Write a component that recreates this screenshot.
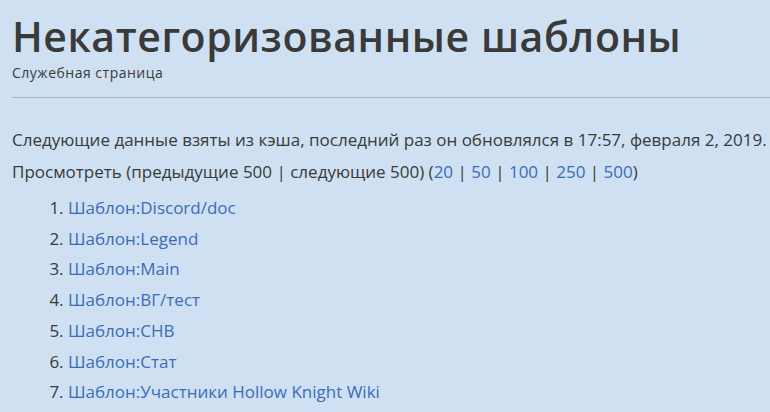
import React from "react";

const items = [
  "Шаблон:Discord/doc",
  "Шаблон:Legend",
  "Шаблон:Main",
  "Шаблон:ВГ/тест",
  "Шаблон:СНВ",
  "Шаблон:Стат",
  "Шаблон:Участники Hollow Knight Wiki",
];

export default function App() {
  return (
    <div
      className="w-[770px] h-[412px] overflow-hidden bg-[#cee0f2] text-[#3a3a3a] pl-[12px]"
      style={{ fontFamily: '"Open Sans", "Liberation Sans", sans-serif' }}
    >
      <h1 className="text-[41px] font-semibold tracking-[0.55px] leading-[48px] pt-[12px] whitespace-nowrap">
        Некатегоризованные шаблоны
      </h1>
      <div className="text-[14px] tracking-[0.5px] leading-[18px] mt-[4px]">Служебная страница</div>
      <div className="mt-[15px] h-px bg-[#a5b5c6]" />
      <p className="text-[17px] leading-[32px] mt-[26px] whitespace-nowrap">
        Следующие данные взяты из кэша, последний раз он обновлялся в 17:57, февраля 2, 2019.
      </p>
      <p className="text-[17px] leading-[32px] whitespace-nowrap">
        Просмотреть (предыдущие 500 | следующие 500) (
        <span className="text-[#3a6db8]">20</span> | <span className="text-[#3a6db8]">50</span> |{" "}
        <span className="text-[#3a6db8]">100</span> | <span className="text-[#3a6db8]">250</span> |{" "}
        <span className="text-[#3a6db8]">500</span>)
      </p>
      <ol className="list-decimal pl-[56px] text-[17px] leading-[30.7px] mt-[5px]">
        {items.map((t) => (
          <li key={t}>
            <span className="text-[#3a6db8]">{t}</span>
          </li>
        ))}
      </ol>
    </div>
  );
}
